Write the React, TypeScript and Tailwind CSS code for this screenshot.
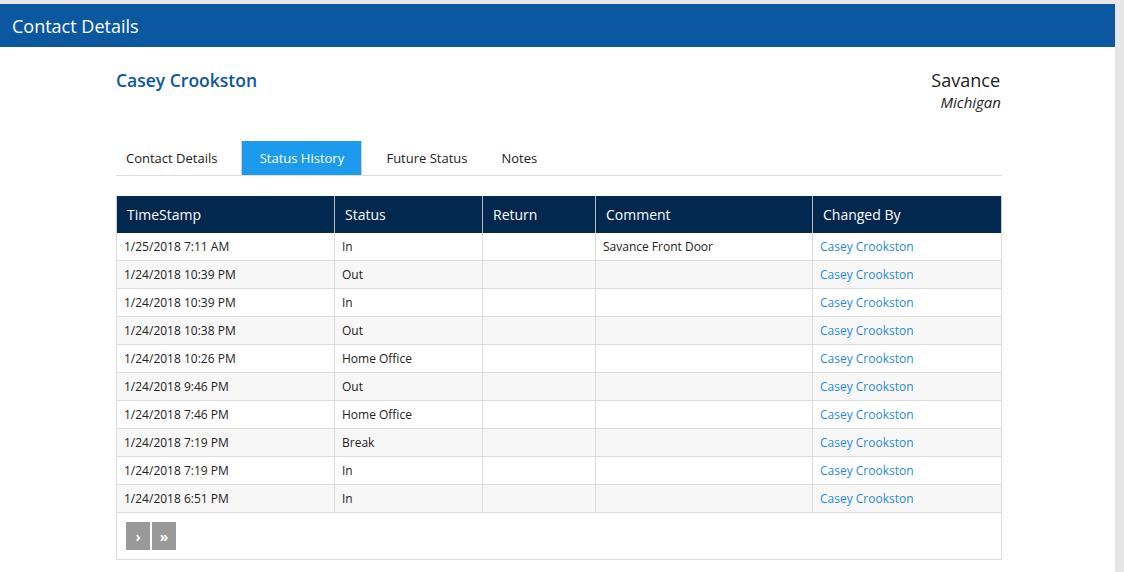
import React from "react";

const rows = [
  ["1/25/2018 7:11 AM", "In", "", "Savance Front Door"],
  ["1/24/2018 10:39 PM", "Out", "", ""],
  ["1/24/2018 10:39 PM", "In", "", ""],
  ["1/24/2018 10:38 PM", "Out", "", ""],
  ["1/24/2018 10:26 PM", "Home Office", "", ""],
  ["1/24/2018 9:46 PM", "Out", "", ""],
  ["1/24/2018 7:46 PM", "Home Office", "", ""],
  ["1/24/2018 7:19 PM", "Break", "", ""],
  ["1/24/2018 7:19 PM", "In", "", ""],
  ["1/24/2018 6:51 PM", "In", "", ""],
];

const widths = ["w-[217px]", "w-[148px]", "w-[113px]", "w-[217px]", "w-[189px]"];
const headers = ["TimeStamp", "Status", "Return", "Comment", "Changed By"];

export default function App() {
  return (
    <div
      className="min-h-screen bg-[#e6e6e6] pt-[4px] pr-[9px]"
      style={{ fontFamily: '"Open Sans", "Liberation Sans", sans-serif' }}
    >
      <div className="bg-white min-h-[568px]">
        <div className="h-[43px] bg-[#0b57a0] flex items-center pl-[12px] pt-[1px]">
          <span className="text-white text-[18px]">Contact Details</span>
        </div>
        <div className="w-[886px] ml-[116px] pt-[21px]">
          <div className="flex justify-between pr-[1px]">
            <div className="text-[17.5px] leading-[24px] text-[#0b57a0] font-semibold">Casey Crookston</div>
            <div className="text-right">
              <div className="text-[18px] leading-[24px] text-[#222] pr-[1px]">Savance</div>
              <div className="text-[15px] leading-[20px] italic text-[#222]">Michigan</div>
            </div>
          </div>
          <div className="mt-[29px] flex border-b border-[#dddddd] h-[35px] text-[13px] text-[#222] pt-[2px]">
            <div className="pl-[10px] pr-[24px] flex items-center">Contact Details</div>
            <div className="flex items-center bg-[#1c9bec] text-white border-x border-[#cfcfcf] w-[121px] justify-center -mt-[2px]">
              <span className="pt-[2px]">Status History</span>
            </div>
            <div className="pl-[24px] pr-[17px] flex items-center">Future Status</div>
            <div className="px-[17px] flex items-center">Notes</div>
          </div>
          <div className="mt-[20px]">
            <div className="flex bg-[#03284f] h-[37px] text-white text-[14px] border-x border-[#cfcfcf]">
              {headers.map((h, i) => (
                <div
                  key={h}
                  className={`${widths[i]} flex items-center pl-[10px] ${i > 0 ? "border-l border-[#b8b8b8]" : ""}`}
                >
                  {h}
                </div>
              ))}
            </div>
            {rows.map((r, ri) => (
              <div
                key={ri}
                className={`flex h-[28px] text-[12px] text-[#222] border-x border-b border-[#dddddd] ${ri % 2 === 1 ? "bg-[#f7f7f7]" : "bg-white"}`}
              >
                {r.map((c, ci) => (
                  <div
                    key={ci}
                    className={`${widths[ci]} flex items-center pl-[7px] ${ci > 0 ? "border-l border-[#dddddd]" : ""}`}
                  >
                    {c}
                  </div>
                ))}
                <div className={`${widths[4]} flex items-center pl-[7px] border-l border-[#dddddd] text-[#1f8ae0]`}>
                  Casey Crookston
                </div>
              </div>
            ))}
            <div className="h-[47px] border-x border-b border-[#dddddd] flex items-start pt-[9px] pl-[9px] gap-[2px]">
              <div className="w-[24px] h-[28px] bg-[#999999] flex items-center justify-center text-white text-[14px] font-bold">›</div>
              <div className="w-[24px] h-[28px] bg-[#999999] flex items-center justify-center text-white text-[14px] font-bold">»</div>
            </div>
          </div>
        </div>
      </div>
    </div>
  );
}
